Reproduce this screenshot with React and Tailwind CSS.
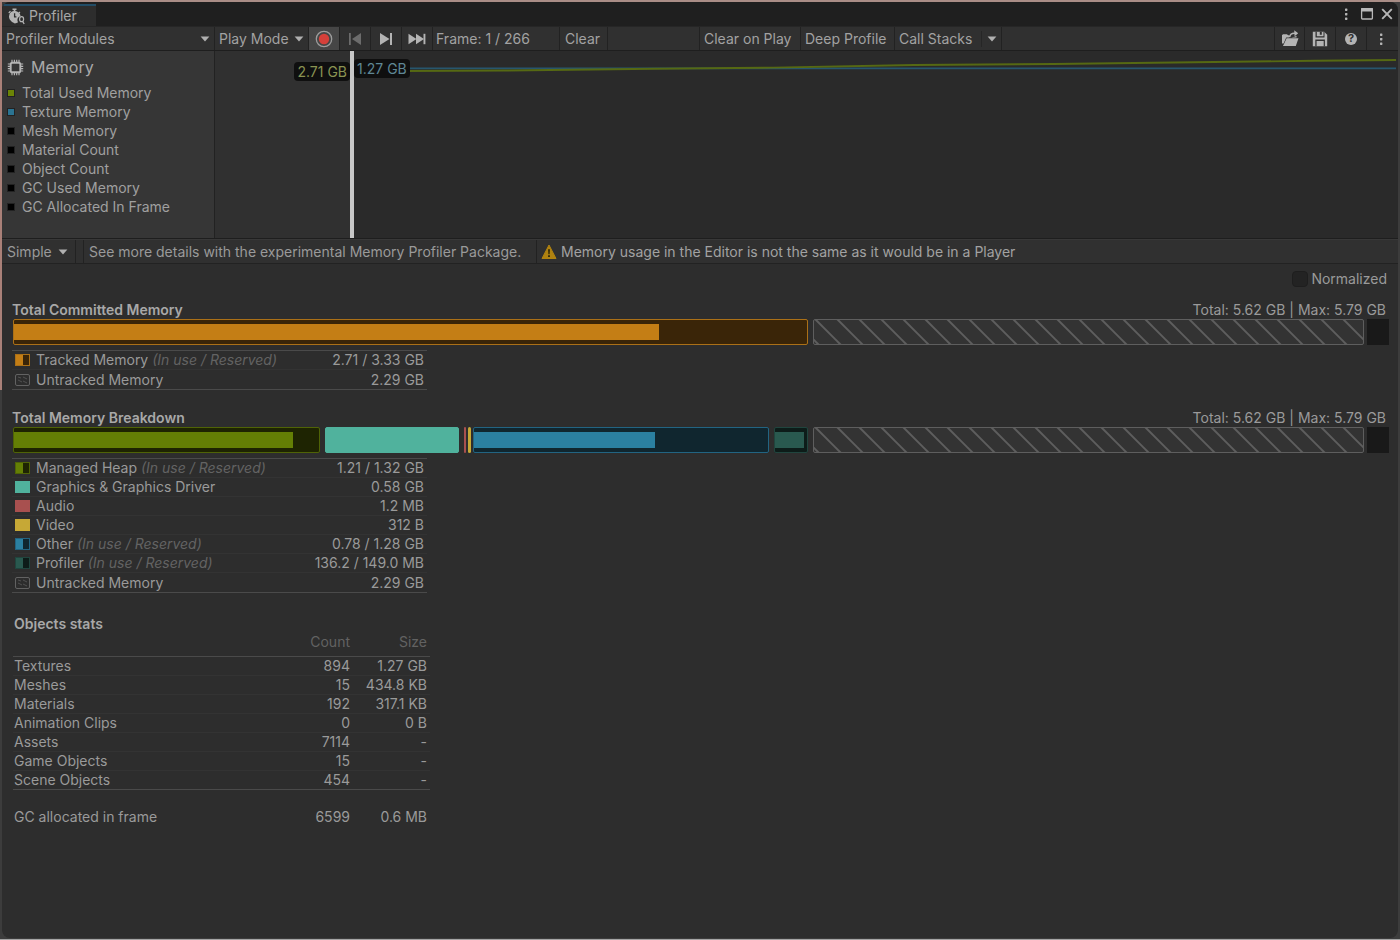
import React from "react";

const chartSeries = [
  { label: "Total Used Memory", color: "bg-[#6b8406]" },
  { label: "Texture Memory", color: "bg-[#2b7391]" },
  { label: "Mesh Memory", color: "bg-black" },
  { label: "Material Count", color: "bg-black" },
  { label: "Object Count", color: "bg-black" },
  { label: "GC Used Memory", color: "bg-black" },
  { label: "GC Allocated In Frame", color: "bg-black" },
];

const orange = { fill: "bg-[#c47e15]", dark: "bg-[#3a2508]", border: "border-[#ab7017]" };
const green = { fill: "bg-[#647f05]", dark: "bg-[#1e2402]", border: "border-[#4f6306]" };
const teal = { fill: "bg-[#50b29d]", dark: "bg-[#50b29d]", border: "border-[#50b29d]" };
const red = { fill: "bg-[#a8504f]", dark: "bg-[#a8504f]", border: "border-[#a8504f]" };
const yellow = { fill: "bg-[#c6a836]", dark: "bg-[#c6a836]", border: "border-[#c6a836]" };
const blue = { fill: "bg-[#2b80a1]", dark: "bg-[#10262f]", border: "border-[#226482]" };
const pine = { fill: "bg-[#29594f]", dark: "bg-[#0d1c19]", border: "border-[#20453e]" };

const committed = {
  title: "Total Committed Memory",
  segments: [{ tone: orange, size: 795, used: 0.813 }],
  rows: [
    { label: "Tracked Memory", split: true, value: "2.71 / 3.33 GB", tone: orange },
    { label: "Untracked Memory", value: "2.29 GB" },
  ],
};

const breakdown = {
  title: "Total Memory Breakdown",
  segments: [
    { tone: green, size: 307, used: 0.915 },
    { tone: teal, size: 132, gap: "ml-[5px]" },
    { tone: red, size: 2, gap: "ml-[5px]" },
    { tone: yellow, size: 3, gap: "ml-[2px]" },
    { tone: blue, size: 296, used: 0.617, gap: "ml-[2px]" },
    { tone: pine, size: 32, used: 0.92, gap: "ml-[5px]" },
  ],
  rows: [
    { label: "Managed Heap", split: true, value: "1.21 / 1.32 GB", tone: green },
    { label: "Graphics & Graphics Driver", value: "0.58 GB", tone: teal },
    { label: "Audio", value: "1.2 MB", tone: red },
    { label: "Video", value: "312 B", tone: yellow },
    { label: "Other", split: true, value: "0.78 / 1.28 GB", tone: blue },
    { label: "Profiler", split: true, value: "136.2 / 149.0 MB", tone: pine },
    { label: "Untracked Memory", value: "2.29 GB" },
  ],
};

const objectStats = [
  ["Textures", "894", "1.27 GB"],
  ["Meshes", "15", "434.8 KB"],
  ["Materials", "192", "317.1 KB"],
  ["Animation Clips", "0", "0 B"],
  ["Assets", "7114", "-"],
  ["Game Objects", "15", "-"],
  ["Scene Objects", "454", "-"],
];

function Caret() {
  return (
    <svg className="pointer-events-none h-[6px] w-[10px] shrink-0" viewBox="0 0 10 6" fill="#b0b0b0" aria-hidden="true">
      <path d="M0.6 0.4h8.8L5 5.6z" />
    </svg>
  );
}

function Dots() {
  return (
    <svg className="h-4 w-4" viewBox="0 0 16 16" fill="#b4b4b4" aria-hidden="true">
      <rect x="7" y="2.5" width="2.4" height="2.4" rx="0.6" />
      <rect x="7" y="7" width="2.4" height="2.4" rx="0.6" />
      <rect x="7" y="11.5" width="2.4" height="2.4" rx="0.6" />
    </svg>
  );
}

function StopwatchIcon() {
  return (
    <svg className="h-[17px] w-[18px] shrink-0" viewBox="0 0 18 17" aria-hidden="true">
      <path fill="#b4b4b4" d="M4.5 0.6h4v1.3H7.4v1.2c1.2 0.1 2.3 0.6 3.1 1.3l0.9-0.9 1 1-0.9 1c0.6 0.8 1 1.7 1.1 2.8-2 0.3-3.3 1.9-3.2 3.7 0 0.9 0.2 1.6 0.7 2.3-0.9 0.7-2.1 1.1-3.3 1.1C3.5 14.1 1 11.6 1 8.5 1 5.7 3 3.5 5.7 3.1V1.9H4.5z" />
      <path fill="#b4b4b4" d="M0.3 4.5l1.7-1.8 0.9 0.9-1.7 1.8z" />
      <path stroke="#2d2d2d" strokeWidth="1.3" fill="none" d="M6.6 5.2v3.6h1.8" />
      <ellipse cx="13.6" cy="11.2" rx="2" ry="2.5" fill="none" stroke="#b4b4b4" strokeWidth="1.2" />
      <path stroke="#b4b4b4" strokeWidth="1.3" d="M14.6 13.2l1.6 2.8" />
    </svg>
  );
}

function ChipIcon() {
  return (
    <svg className="h-[17px] w-[17px] shrink-0" viewBox="0 0 17 17" fill="none" stroke="#b4b4b4" aria-hidden="true">
      <rect x="3.7" y="3.7" width="9.6" height="9.6" rx="1.6" strokeWidth="1.9" />
      <path strokeWidth="1.2" d="M5 0.8v2.4M7.4 0.8v2.4M9.7 0.8v2.4M12 0.8v2.4M5 13.8v2.4M7.4 13.8v2.4M9.7 13.8v2.4M12 13.8v2.4M0.8 5h2.4M0.8 7.4h2.4M0.8 9.7h2.4M0.8 12h2.4M13.8 5h2.4M13.8 7.4h2.4M13.8 9.7h2.4M13.8 12h2.4" />
    </svg>
  );
}

function ToolButton({ label, className, children }) {
  return (
    <button
      type="button"
      aria-label={label}
      className={`flex h-full shrink-0 items-center border-r border-[#222222] ${className}`}
    >
      {children}
    </button>
  );
}

function Dropdown({ label, className, selectClass, caretClass }) {
  return (
    <label className={`relative flex h-full shrink-0 items-center border-r border-[#222222] ${className}`}>
      <select aria-label={label} className={`h-full w-full appearance-none bg-transparent outline-none ${selectClass}`}>
        <option>{label}</option>
      </select>
      <span className={`pointer-events-none absolute inset-y-0 flex items-center ${caretClass}`}>
        <Caret />
      </span>
    </label>
  );
}

function TitleBar() {
  return (
    <header className="flex h-6 items-end justify-between bg-[#1f1f1f]">
      <div className="flex h-[22px] w-[94px] items-center gap-[3px] border-t-2 border-[#224c66] bg-[#2d2d2d] pl-[6px] text-[14px] text-[#a8a8a8]">
        <StopwatchIcon />
        <h1>Profiler</h1>
      </div>
      <div className="flex h-full items-center gap-[6px] pr-1">
        <button type="button" aria-label="Window menu"><Dots /></button>
        <button type="button" aria-label="Maximize">
          <svg className="h-[14px] w-[14px]" viewBox="0 0 14 14" aria-hidden="true">
            <rect x="1.6" y="1.6" width="10.8" height="10.4" rx="0.8" fill="none" stroke="#b8b8b8" strokeWidth="1.3" />
            <rect x="1" y="1" width="12" height="3.5" rx="0.8" fill="#b8b8b8" />
          </svg>
        </button>
        <button type="button" aria-label="Close">
          <svg className="h-[14px] w-[14px]" viewBox="0 0 14 14" stroke="#b8b8b8" strokeWidth="1.9" aria-hidden="true">
            <path d="M2.2 2.2l9.6 9.6M11.8 2.2l-9.6 9.6" />
          </svg>
        </button>
      </div>
    </header>
  );
}

function Toolbar() {
  return (
    <div role="toolbar" aria-label="Profiler controls" className="flex h-[25px] items-center border-y border-b-[#1e1e1e] border-t-[#262626] bg-[#303030] text-[14px] text-[#a2a2a2]">
      <Dropdown label="Profiler Modules" className="w-[213px]" selectClass="pl-1" caretClass="right-1" />
      <Dropdown label="Play Mode" className="w-[94px]" selectClass="pl-1" caretClass="right-1" />
      <ToolButton label="Record" className="w-[31px] justify-center bg-[#464646]">
        <svg className="h-[18px] w-[18px]" viewBox="0 0 18 18" aria-hidden="true">
          <circle cx="9" cy="9" r="7.7" fill="none" stroke="#9c9c9c" strokeWidth="1.3" />
          <circle cx="9" cy="9" r="5.2" fill="#d5403a" />
        </svg>
      </ToolButton>
      <ToolButton label="Previous frame" className="w-[31px] justify-center">
        <svg className="h-[14px] w-[14px]" viewBox="0 0 14 14" fill="#6c6c6c" aria-hidden="true">
          <rect x="1" y="1" width="1.8" height="12" />
          <path d="M13 1v12L4 7z" />
        </svg>
      </ToolButton>
      <ToolButton label="Next frame" className="w-[31px] justify-center">
        <svg className="h-[14px] w-[14px]" viewBox="0 0 14 14" fill="#b4b4b4" aria-hidden="true">
          <rect x="11" y="1" width="2" height="12" />
          <path d="M1 1v12L10.5 7z" />
        </svg>
      </ToolButton>
      <ToolButton label="Current frame" className="w-[31px] justify-center">
        <svg className="h-3 w-[18px]" viewBox="0 0 18 12" fill="#b4b4b4" aria-hidden="true">
          <path d="M0.5 0.8v10.4L8.5 6zM8 0.8v10.4L16 6z" />
          <rect x="15.5" y="0.8" width="1.9" height="10.4" />
        </svg>
      </ToolButton>
      <div className="flex h-full w-[127px] shrink-0 items-center border-r border-[#222222] pl-[3px]">Frame: 1 / 266</div>
      <ToolButton className="w-12 pl-[5px]">Clear</ToolButton>
      <div className="h-full w-[92px] shrink-0 border-r border-[#222222]" />
      <ToolButton className="w-[101px] pl-1">Clear on Play</ToolButton>
      <ToolButton className="w-[94px] pl-1">Deep Profile</ToolButton>
      <button type="button" className="h-full w-[86px] shrink-0 pl-1 text-left">Call Stacks</button>
      <ToolButton label="Call stack options" className="w-[21px]">
        <span className="flex h-4 w-full items-center justify-center border-l border-[#262626]"><Caret /></span>
      </ToolButton>
      <div className="h-full flex-1 border-r border-[#222222]" />
      <ToolButton label="Load" className="w-[30px] justify-center">
        <svg className="h-[17px] w-[18px]" viewBox="0 0 18 17" aria-hidden="true">
          <path fill="#b4b4b4" d="M1 5.2l1-1h4l1 1h1.2v2.2H5.2L2.6 13.5H1z" />
          <path fill="#b4b4b4" d="M5.6 8.3h11.9L14.8 16H1.8l0.7-1z" />
          <path fill="none" stroke="#b4b4b4" strokeWidth="1.6" d="M8.6 7.2c0.3-2.8 2-4 4.7-4h2" />
          <path fill="#b4b4b4" d="M13.2 0.3l4 3-3.6 3z" />
          <path fill="#b4b4b4" d="M10 7.5h5.5V5.8l-2 1z" />
        </svg>
      </ToolButton>
      <ToolButton label="Save" className="w-[31px] justify-center">
        <svg className="h-4 w-4" viewBox="0 0 16 16" aria-hidden="true">
          <path fill="#b4b4b4" d="M0.8 0.8h11.4l3 3v11.4H0.8z" />
          <path fill="#303030" d="M3.5 0.8h1.3v4.4h6.7V0.8h1v5.6h-9zM7.8 0.8h2v3h-2zM3.3 8.6h9.6v6.6h-1.2V9.9H4.6v5.3H3.3z" />
        </svg>
      </ToolButton>
      <ToolButton label="Help" className="w-[31px] justify-center">
        <span className="flex h-3 w-3 items-center justify-center rounded-full bg-[#b4b4b4] text-[11px] font-bold leading-none text-[#303030]">?</span>
      </ToolButton>
      <button type="button" aria-label="More options" className="flex h-full w-[31px] shrink-0 items-center pl-[6px]"><Dots /></button>
    </div>
  );
}

function ModuleArea() {
  return (
    <section className="flex h-[188px] border-b border-[#1e1e1e]">
      <div className="w-[213px] shrink-0 border-r border-[#222222] bg-[#363636] pt-1">
        <h2 className="flex h-6 items-center gap-[7px] pl-[5px] text-[16px] text-[#aaaaaa]">
          <ChipIcon />
          Memory
        </h2>
        <ul className="mt-1 text-[14px] leading-[19px] text-[#a0a0a0]">
          {chartSeries.map((s) => (
            <li key={s.label} className="flex items-center gap-[7px] pl-[5px]">
              <span className={`h-2 w-2 border border-[#222222] ${s.color}`} />
              {s.label}
            </li>
          ))}
        </ul>
      </div>
      <div className="flex min-w-0 flex-1 bg-[#2a2a2a]">
        <div className="w-[135px] shrink-0 bg-[#303030]" />
        <div className="relative w-[4px] shrink-0 bg-[#c8c8c8]">
          <span className="absolute right-full top-[11px] z-10 whitespace-nowrap rounded bg-[#0f0f0f] px-[3px] text-[14px] leading-[19px] text-[#8a9352]">2.71 GB</span>
          <span className="absolute left-full top-[8px] z-10 whitespace-nowrap rounded bg-[#0f0f0f] px-[3px] text-[14px] leading-[19px] text-[#5f8795]">1.27 GB</span>
        </div>
        <svg className="mr-[2px] h-full min-w-0 flex-1" viewBox="0 0 1042 187" preserveAspectRatio="none" fill="none" aria-hidden="true">
          <path stroke="#27566e" strokeWidth="1.7" d="M0 17.3H1042" />
          <path stroke="#566913" strokeWidth="1.9" d="M0 20.3L150 19.5L300 17.8L420 16.6L560 14L700 13L860 11L960 9.8L1042 9" />
        </svg>
      </div>
    </section>
  );
}

function DetailBar() {
  return (
    <div className="flex h-[25px] items-center border-b border-t border-b-[#222222] border-t-[#383838] bg-[#303030] text-[14px] text-[#9a9a9a]">
      <Dropdown label="Simple" className="w-[74px]" selectClass="pl-[5px]" caretClass="right-[7px]" />
      <div className="h-full w-2 shrink-0 border-r border-[#222222]" />
      <button type="button" className="h-full w-[453px] shrink-0 border-r border-[#222222] px-[5px] text-left">
        See more details with the experimental Memory Profiler Package.
      </button>
      <p className="flex items-center gap-1 whitespace-nowrap pl-1 text-[#a2a2a2]">
        <svg className="h-4 w-4 shrink-0" viewBox="0 0 16 16" aria-hidden="true">
          <path fill="#b08210" stroke="#b08210" strokeLinejoin="round" d="M8 1l7 13.5H1z" />
          <path fill="#2b2508" d="M7.1 5.2h1.8l-0.3 5H7.4zM7.1 11.2h1.8V13H7.1z" />
        </svg>
        Memory usage in the Editor is not the same as it would be in a Player
      </p>
    </div>
  );
}

function Hatch({ id }) {
  return (
    <svg className="h-full w-full" aria-hidden="true">
      <defs>
        <pattern id={id} width="22" height="22" patternUnits="userSpaceOnUse">
          <path d="M1 -1L24 22M-21 -1L3 23" stroke="#5e5e5e" strokeWidth="1.9" />
        </pattern>
      </defs>
      <rect width="100%" height="100%" fill={`url(#${id})`} />
    </svg>
  );
}

function Segment({ tone, size, used, gap = "" }) {
  return (
    <div
      className={`flex h-full min-w-0 basis-0 items-center overflow-hidden rounded-[2px] ${size > 4 ? "border" : ""} ${tone.border} ${tone.dark} ${gap}`}
      style={{ flexGrow: size }}
    >
      {used && <div className={`h-4 ${tone.fill}`} style={{ width: `${used * 100}%` }} />}
    </div>
  );
}

function Swatch({ row }) {
  if (!row.tone) {
    return (
      <svg className="h-3 w-[15px] shrink-0" viewBox="0 0 15 12" fill="none" stroke="#626262" aria-hidden="true">
        <rect x="0.5" y="0.5" width="14" height="11" rx="1.5" />
        <path strokeWidth="0.7" d="M3 3l3 1M8 3l4 2M3 6l4 2M8 7l4 2" />
      </svg>
    );
  }
  return (
    <span className={`flex h-3 w-[15px] shrink-0 justify-end border ${row.tone.border} ${row.tone.fill}`}>
      {row.split && <span className={`h-full w-[6px] ${row.tone.dark}`} />}
    </span>
  );
}

function MemorySection({ id, data }) {
  const last = data.rows.length - 1;
  return (
    <section>
      <div className="flex h-[19px] items-center justify-between pr-[3px] text-[14px]">
        <h3 className="font-semibold text-[#a8a8a8]">{data.title}</h3>
        <p>Total: 5.62 GB | Max: 5.79 GB</p>
      </div>
      <div className="flex h-[26px] pl-[1px]">
        <div className="flex min-w-0 basis-0" style={{ flexGrow: 795 }}>
          {data.segments.map((s, i) => (
            <Segment key={i} {...s} />
          ))}
        </div>
        <div className="ml-[5px] min-w-0 basis-0 overflow-hidden rounded-[2px] border border-[#5e5e5e] bg-[#333333]" style={{ flexGrow: 549 }}>
          <Hatch id={id} />
        </div>
        <div className="ml-[3px] min-w-0 basis-0 bg-[#191919]" style={{ flexGrow: 22 }} />
      </div>
      <table className="mt-[5px] w-[415px] border-separate border-spacing-0 border-y border-[#4a4a4a] text-[14px] leading-[18px]">
        <tbody>
          {data.rows.map((row, i) => (
            <tr key={row.label}>
              <th scope="row" className={`h-[19px] p-0 pl-[3px] text-left font-normal ${i < last ? "border-b border-[#333333]" : ""}`}>
                <span className="flex items-center gap-[6px]">
                  <Swatch row={row} />
                  <span>
                    {row.label}
                    {row.split && <em className="text-[#636363]"> (In use / Reserved)</em>}
                  </span>
                </span>
              </th>
              <td className={`h-[19px] p-0 pr-[3px] text-right ${i < last ? "border-b border-[#333333]" : ""}`}>{row.value}</td>
            </tr>
          ))}
        </tbody>
      </table>
    </section>
  );
}

function ObjectStats() {
  const last = objectStats.length - 1;
  return (
    <section className="ml-[1px] mt-[21px] w-[417px] text-[14px] leading-[18px]">
      <h3 className="pl-[1px] font-semibold leading-5 text-[#a8a8a8]">Objects stats</h3>
      <table className="w-full border-separate border-spacing-0">
        <thead>
          <tr className="text-[#626262]">
            <td className="border-b border-[#4a4a4a] p-0" />
            <th scope="col" className="h-[23px] w-20 border-b border-[#4a4a4a] p-0 text-right align-top font-normal leading-4">Count</th>
            <th scope="col" className="h-[23px] w-20 border-b border-[#4a4a4a] p-0 pr-[3px] text-right align-top font-normal leading-4">Size</th>
          </tr>
        </thead>
        <tbody>
          {objectStats.map(([name, count, size], i) => {
            const line = i < last ? "border-[#333333]" : "border-[#4a4a4a]";
            return (
              <tr key={name}>
                <th scope="row" className={`h-[19px] border-b p-0 pl-[1px] text-left font-normal ${line}`}>{name}</th>
                <td className={`h-[19px] border-b p-0 text-right ${line}`}>{count}</td>
                <td className={`h-[19px] border-b p-0 pr-[3px] text-right ${line}`}>{size}</td>
              </tr>
            );
          })}
        </tbody>
        <tfoot>
          <tr>
            <th scope="row" className="p-0 pl-[1px] pt-[18px] text-left font-normal">GC allocated in frame</th>
            <td className="p-0 pt-[18px] text-right">6599</td>
            <td className="p-0 pr-[3px] pt-[18px] text-right">0.6 MB</td>
          </tr>
        </tfoot>
      </table>
    </section>
  );
}

export default function App() {
  return (
    <div className="flex min-h-screen flex-col border-b border-[#a5a5a5] bg-[#3c3c3c] bg-[linear-gradient(#a98d86,#a98d86),linear-gradient(#a98078,#a98078)] bg-[size:100%_2px,2px_390px] bg-no-repeat px-[2px] pb-[1px] pt-[2px] font-['Inter',sans-serif] leading-5">
      <div className="flex flex-1 flex-col overflow-hidden rounded-lg bg-[#2d2d2d] text-[#9a9a9a]">
        <TitleBar />
        <Toolbar />
        <ModuleArea />
        <DetailBar />
        <main className="pb-6 pl-[10px] pr-[9px]">
          <div className="flex h-[30px] items-center justify-end pr-[2px]">
            <label className="flex items-center gap-[3px] text-[14px]">
              <input type="checkbox" className="h-4 w-4 appearance-none rounded-sm border border-[#1e1e1e] bg-[#232323] checked:bg-[#2b80a1]" />
              Normalized
            </label>
          </div>
          <div className="flex flex-col gap-[18px] pt-[6px]">
            <MemorySection id="hatch-committed" data={committed} />
            <MemorySection id="hatch-breakdown" data={breakdown} />
          </div>
          <ObjectStats />
        </main>
      </div>
    </div>
  );
}
